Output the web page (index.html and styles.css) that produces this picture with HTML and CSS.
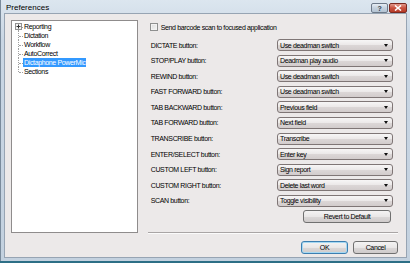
FILE: index.html
```html
<!DOCTYPE html>
<html lang="en">
<head>
    <meta charset="UTF-8">
    <title>Preferences</title>
    <link rel="stylesheet" href="styles.css">
</head>
<body>
    <div class="window">
        <div class="titlebar">
            <span class="title">Preferences</span>
            <div class="caption-buttons">
                <div class="cap-btn help">?</div>
                <div class="cap-btn close">
                    <svg width="8" height="6" viewBox="0 0 8 6"><path d="M1 0.5 L7 5.5 M7 0.5 L1 5.5" stroke="#fff" stroke-width="1.6"/></svg>
                </div>
            </div>
        </div>
        <div class="client">
            <div class="tree">
                <ul class="tree-list">
                    <li class="first">
                        <span class="expander">
                            <svg width="7" height="7" viewBox="0 0 7 7"><path d="M1.5 3.5 H5.5 M3.5 1.5 V5.5" stroke="#333" stroke-width="1"/></svg>
                        </span>
                        <span class="node">Reporting</span>
                    </li>
                    <li><span class="node">Dictation</span></li>
                    <li><span class="node">Workflow</span></li>
                    <li><span class="node">AutoCorrect</span></li>
                    <li><span class="node selected">Dictaphone PowerMic</span></li>
                    <li class="last"><span class="node">Sections</span></li>
                </ul>
            </div>
            <div class="settings">
                <div class="check-row">
                    <span class="checkbox"></span>
                    <span>Send barcode scan to focused application</span>
                </div>
                <div class="rows" id="rows"></div>
                <div class="revert-wrap">
                    <div class="btn revert">Revert to Default</div>
                </div>
                <div class="separator"></div>
                <div class="footer">
                    <div class="btn ok">OK</div>
                    <div class="btn cancel">Cancel</div>
                </div>
            </div>
        </div>
    </div>

    <script>
        const settings = [
            ['DICTATE', 'Use deadman switch'],
            ['STOP/PLAY', 'Deadman play audio'],
            ['REWIND', 'Use deadman switch'],
            ['FAST FORWARD', 'Use deadman switch'],
            ['TAB BACKWARD', 'Previous field'],
            ['TAB FORWARD', 'Next field'],
            ['TRANSCRIBE', 'Transcribe'],
            ['ENTER/SELECT', 'Enter key'],
            ['CUSTOM LEFT', 'Sign report'],
            ['CUSTOM RIGHT', 'Delete last word'],
            ['SCAN', 'Toggle visibility']
        ];
        const rows = document.getElementById('rows');

        // Build one label + dropdown row per button
        settings.forEach(([name, value]) => {
            const row = document.createElement('div');
            row.classList.add('row');
            row.innerHTML = `<span class="label">${name} button:</span>
                <div class="select"><span>${value}</span><span class="arrow"></span></div>`;
            rows.appendChild(row);
        });
    </script>
</body>
</html>
```

FILE: styles.css
```css
* {
    box-sizing: border-box;
    margin: 0;
    padding: 0;
}
body {
    width: 410px;
    height: 263px;
    background: #2d6f86;
    font-family: 'Liberation Sans', Arial, sans-serif;
    font-size: 7px;
    letter-spacing: -0.35px;
    color: #000;
    overflow: hidden;
}
.window {
    width: 410px;
    height: 261px;
    padding: 0 3px 3px 3px;
    background: linear-gradient(to bottom, #dce6ef, #c9d6e4 40px, #c3d1df);
    border-left: 1px solid #7a8b9c;
}
.titlebar {
    height: 13px;
    display: flex;
    align-items: center;
}
.title {
    font-size: 8px;
    letter-spacing: 0;
    padding-left: 2px;
    padding-top: 2px;
}
.caption-buttons {
    margin-left: auto;
    align-self: flex-start;
    margin-top: 3px;
    display: flex;
    gap: 1px;
}
.cap-btn {
    height: 10px;
    border: 1px solid #6d7a89;
    border-radius: 2px;
    display: flex;
    align-items: center;
    justify-content: center;
}
.cap-btn.help {
    width: 17px;
    background: linear-gradient(to bottom, #e6edf4, #c4d1de 50%, #b4c3d3);
    font-size: 7px;
    font-weight: bold;
    color: #2f3c4a;
}
.cap-btn.close {
    width: 18px;
    border-color: #7a2a22;
    background: linear-gradient(to bottom, #e39a8d, #c9513f 50%, #b73a28);
}
.client {
    height: 245px;
    background: #ece9e9;
    border: 1px solid #97a4b3;
    padding: 6px 8px 0 6px;
    display: flex;
    gap: 10px;
    align-items: flex-start;
}
.tree {
    width: 127px;
    height: 213px;
    background: #fff;
    border: 1px solid #8f8c8c;
}
.tree-list {
    list-style: none;
    padding-top: 1px;
}
.tree-list li {
    position: relative;
    height: 9px;
    line-height: 9px;
    padding-left: 11px;
}
.tree-list li::before {
    content: '';
    position: absolute;
    left: 6px;
    top: 0;
    bottom: 0;
    border-left: 1px dotted #a0a0a0;
}
.tree-list li.first::before {
    top: 50%;
}
.tree-list li.last::before {
    bottom: 50%;
}
.tree-list li::after {
    content: '';
    position: absolute;
    left: 7px;
    top: 50%;
    width: 4px;
    border-top: 1px dotted #a0a0a0;
}
.expander {
    position: absolute;
    left: 3px;
    top: 1px;
    width: 7px;
    height: 7px;
    background: #f4f4f4;
    border: 1px solid #919191;
    z-index: 1;
    display: flex;
}
.expander svg {
    margin: -1px;
}
.node {
    padding: 0 1px;
    display: inline-block;
    height: 9px;
}
.node.selected {
    background: #3399ff;
    color: #fff;
}
.settings {
    width: 251px;
    display: flex;
    flex-direction: column;
}
.check-row {
    margin-top: 1px;
    height: 12px;
    padding-left: 2px;
    display: flex;
    align-items: center;
    gap: 3px;
}
.checkbox {
    width: 8px;
    height: 8px;
    border: 1px solid #8e8f8f;
    background: linear-gradient(to bottom right, #dcdcdc, #f6f6f6);
    box-shadow: inset 0 0 0 1px #f2f2f2;
}
.rows {
    margin-top: 6px;
    padding: 0 5px 0 3px;
    display: flex;
    flex-direction: column;
    gap: 3.6px;
}
.row {
    height: 12px;
    display: flex;
    align-items: center;
}
.label {
    flex: 1;
}
.select {
    width: 116px;
    height: 12px;
    border: 1px solid #7f7676;
    border-radius: 3px;
    background: linear-gradient(to bottom, #f7f6f6, #ebe8e8 50%, #dcd7d7 51%, #d2cccc);
    padding: 0 4px 0 2px;
    display: flex;
    align-items: center;
    justify-content: space-between;
}
.arrow {
    width: 0;
    height: 0;
    border-left: 2.5px solid transparent;
    border-right: 2.5px solid transparent;
    border-top: 3px solid #111;
}
.btn {
    height: 13px;
    border: 1px solid #707070;
    border-radius: 3px;
    background: linear-gradient(to bottom, #f4f3f3, #e9e7e7 50%, #dbd8d8 51%, #cfcbcb);
    display: flex;
    align-items: center;
    justify-content: center;
}
.revert-wrap {
    margin-top: 3px;
    padding-right: 7px;
    display: flex;
    justify-content: flex-end;
}
.btn.revert {
    width: 88px;
}
.separator {
    margin-top: 9px;
    border-top: 1px solid #a9a5a5;
    border-bottom: 1px solid #fbfbfb;
}
.footer {
    margin-top: 7px;
    display: flex;
    justify-content: flex-end;
    gap: 5px;
}
.btn.ok {
    width: 47px;
    border-color: #3c7fb1;
    box-shadow: inset 0 0 0 1px #a6d8f2;
}
.btn.cancel {
    width: 45px;
}
```
